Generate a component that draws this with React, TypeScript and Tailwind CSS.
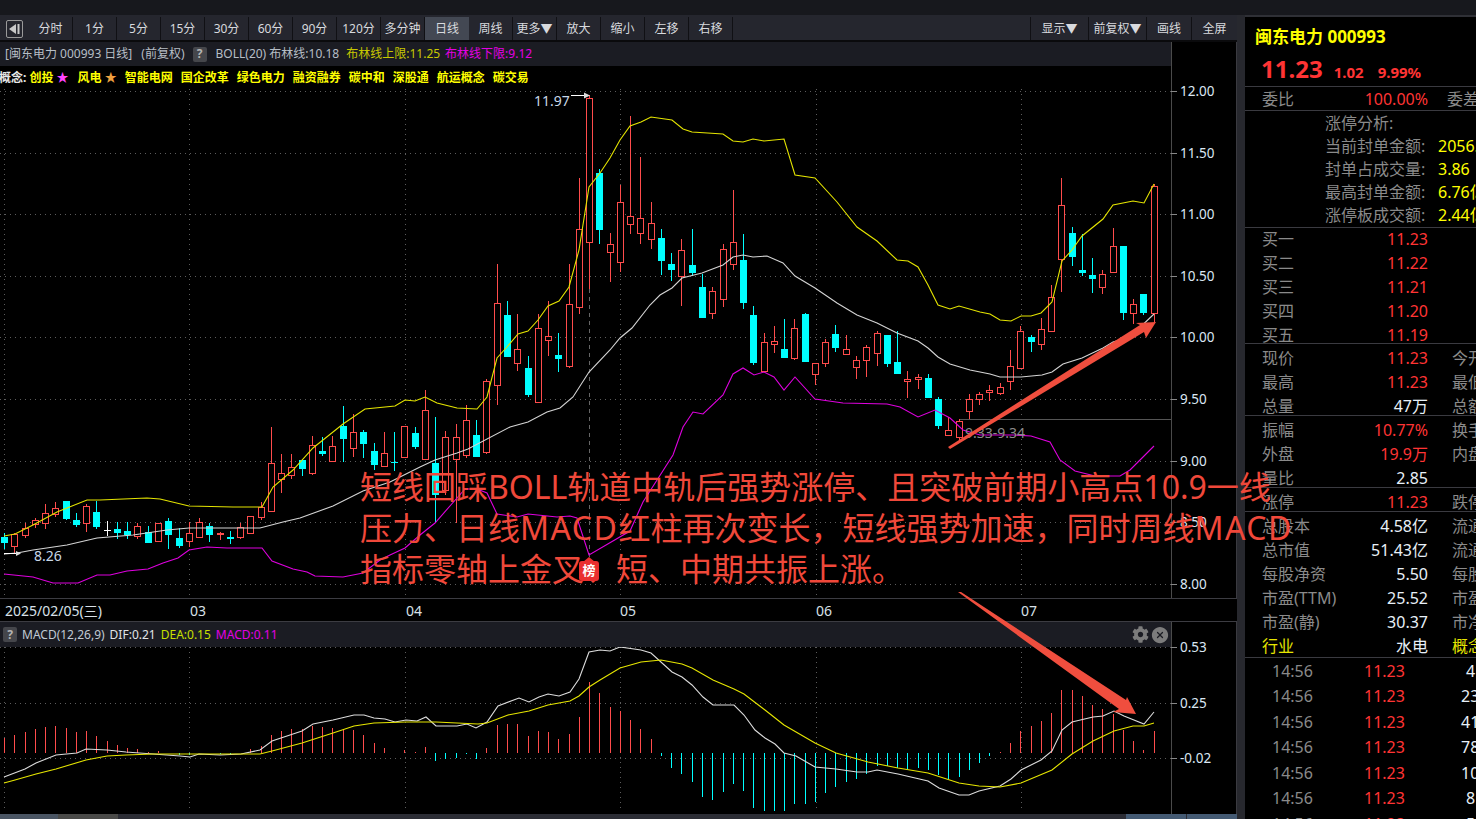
import { FaCog } from 'react-icons/fa';
import { IoCloseCircle } from 'react-icons/io5';

type Candle = [string, number, number, number, number];

// type, body top, body bottom, high, low (all in screen pixels)
const candles: Candle[] = [
  ['c', 537, 543, 533, 549], ['r', 534, 546, 533, 553], ['r', 528, 535, 523, 538], ['r', 520, 524, 518, 528],
  ['r', 513, 523, 504, 529], ['r', 508, 514, 502, 517], ['c', 501, 519, 501, 520], ['c', 520, 525, 513, 527],
  ['r', 506, 523, 504, 532], ['c', 512, 527, 501, 529], ['w', 530, 530, 521, 536], ['c', 529, 533, 522, 539],
  ['c', 531, 535, 522, 539], ['r', 526, 536, 523, 539], ['c', 532, 543, 526, 543], ['r', 523, 541, 523, 541],
  ['c', 521, 535, 518, 549], ['c', 538, 546, 528, 548], ['r', 533, 541, 522, 547], ['r', 522, 537, 518, 537],
  ['c', 526, 535, 523, 542], ['r', 533, 534, 532, 540], ['c', 537, 539, 531, 544], ['r', 527, 537, 523, 539],
  ['r', 516, 533, 516, 533], ['r', 507, 517, 502, 520], ['r', 463, 511, 427, 511], ['r', 473, 479, 454, 493],
  ['r', 467, 475, 454, 479], ['c', 460, 469, 460, 476], ['r', 445, 473, 436, 475], ['c', 451, 454, 437, 456],
  ['r', 446, 461, 436, 462], ['c', 426, 439, 406, 462], ['r', 432, 448, 414, 457], ['c', 432, 444, 430, 458],
  ['c', 451, 465, 443, 470], ['r', 453, 466, 432, 466], ['c', 462, 463, 432, 471], ['r', 426, 457, 426, 457],
  ['c', 433, 447, 427, 449], ['r', 410, 459, 390, 460], ['c', 463, 495, 417, 523], ['r', 437, 490, 431, 495],
  ['r', 437, 459, 424, 523], ['r', 420, 455, 405, 458], ['c', 435, 457, 420, 457], ['r', 381, 452, 379, 454],
  ['r', 303, 385, 264, 405], ['c', 315, 357, 301, 357], ['r', 349, 363, 314, 371], ['c', 368, 395, 356, 397],
  ['r', 328, 402, 314, 403], ['r', 336, 340, 301, 356], ['c', 355, 359, 333, 372], ['r', 304, 366, 264, 368],
  ['r', 229, 307, 178, 314], ['r', 98, 242, 95, 289], ['c', 173, 230, 169, 244], ['r', 244, 252, 233, 282],
  ['r', 202, 262, 185, 272], ['r', 216, 224, 116, 234], ['r', 218, 233, 157, 244], ['r', 223, 239, 202, 249],
  ['c', 238, 261, 229, 275], ['c', 264, 270, 253, 281], ['r', 250, 276, 239, 306], ['c', 265, 273, 229, 276],
  ['c', 287, 318, 274, 318], ['r', 291, 313, 287, 319], ['r', 249, 299, 244, 307], ['r', 242, 264, 190, 270],
  ['c', 260, 303, 234, 309], ['c', 315, 363, 306, 365], ['r', 342, 371, 333, 372], ['r', 341, 344, 326, 353],
  ['c', 349, 358, 319, 358], ['r', 328, 358, 319, 360], ['c', 314, 362, 313, 362], ['r', 363, 374, 363, 385],
  ['r', 342, 363, 339, 367], ['c', 334, 348, 325, 352], ['r', 349, 354, 335, 354], ['r', 360, 367, 356, 379],
  ['r', 347, 360, 345, 377], ['r', 333, 353, 331, 366], ['c', 335, 364, 335, 367], ['c', 362, 374, 331, 374],
  ['r', 379, 381, 371, 398], ['r', 377, 379, 374, 389], ['c', 378, 398, 374, 398], ['c', 399, 426, 397, 429],
  ['r', 430, 435, 417, 435], ['r', 421, 437, 419, 440], ['r', 399, 411, 394, 419], ['r', 394, 399, 392, 405],
  ['r', 390, 392, 385, 401], ['r', 387, 393, 383, 395], ['r', 366, 381, 350, 390], ['r', 331, 368, 326, 368],
  ['c', 337, 342, 335, 352], ['r', 329, 344, 318, 350], ['r', 297, 331, 285, 331], ['r', 205, 259, 178, 292],
  ['c', 233, 257, 227, 266], ['c', 270, 273, 234, 276], ['c', 275, 279, 258, 293], ['r', 274, 287, 270, 294],
  ['r', 246, 272, 228, 272], ['c', 246, 313, 246, 320], ['r', 304, 313, 299, 324], ['c', 294, 313, 294, 315],
  ['r', 186, 313, 184, 323],
];

const upper =
  '4,536 15,534 33,525 57,512 87,500 100,500 147,498 160,499 189,506 233,507 262,507 273,487 293,470 313,448 343,424 365,409 395,406 405,400 415,401 425,397 437,403 457,408 477,409 487,397 497,358 507,347 518,334 528,331 538,320 548,306 559,301 569,287 579,250 589,187 600,173 610,158 620,140 630,126 641,122 651,117 672,120 683,129 692,132 723,134 733,141 743,142 753,139 764,141 784,139 795,175 815,178 837,202 857,227 877,241 897,260 908,261 918,267 928,285 938,305 950,309 959,306 980,312 990,314 1000,320 1011,321 1021,316 1031,316 1041,313 1052,302 1062,261 1072,250 1082,236 1103,219 1113,205 1133,201 1144,203 1154,184';
const middle =
  '4,554 17,553 33,550 67,545 97,538 133,535 167,530 189,528 260,528 283,522 300,518 333,506 363,491 390,482 420,467 435,460 457,453 468,449 510,427 528,422 547,412 560,408 573,397 589,372 610,350 620,338 632,328 650,305 660,295 672,288 682,278 702,273 723,265 733,257 743,255 753,257 767,256 783,263 795,276 815,288 837,303 857,315 877,323 897,333 918,341 928,348 938,357 950,364 970,370 990,374 1000,377 1021,377 1042,375 1052,372 1063,364 1082,358 1103,348 1113,342 1130,337 1154,314';
const lower =
  '4,574 33,577 53,583 78,583 97,575 110,575 127,571 148,569 163,563 178,558 189,550 207,547 227,548 262,548 272,561 293,569 307,572 315,576 343,577 363,573 380,560 390,555 405,548 420,535 435,523 457,498 465,489 477,489 487,493 497,514 517,517 528,514 557,517 570,516 577,518 589,555 630,531 643,502 673,455 683,427 693,412 703,414 723,395 733,374 743,368 754,375 764,372 774,377 784,390 795,377 815,399 843,403 887,404 900,407 918,417 935,410 950,418 963,430 980,435 1013,435 1031,436 1050,442 1060,460 1075,471 1095,476 1120,476 1130,470 1140,460 1154,446';

// MACD histogram, bar height in px from the zero line (plus = red, minus = cyan)
const hist = [
  15, 18, 21, 24, 26, 27, 25, 21, 22, 17, 12, 8, 5, 4, 1, 2, 0, -2, -2, 0, 0, -1, -2, 0, 4, 7, 18, 22, 24, 24, 27, 26, 25, 24, 23, 18, 10, 5, 0, 3, 1, 6,
  -8, -6, -5, -1, -6, 5, 28, 29, 29, 17, 22, 21, 14, 19, 36, 71, 60, 46, 42, 33, 24, 14, -3, -15, -21, -29, -44, -47, -39, -31, -38, -55, -58, -58, -58,
  -51, -51, -49, -40, -34, -29, -26, -21, -13, -13, -15, -16, -15, -17, -22, -26, -24, -17, -10, -3, 1, 10, 22, 27, 32, 40, 63, 63, 57, 48, 44, 39, 23, 12, 3, 22,
];

const dif =
  '4,777 25,769 36,763 56,755 77,753 86,749 107,750 126,752 153,754 180,756 190,757 199,754 220,755 241,754 260,750 272,741 302,731 313,724 333,720 354,715 364,715 374,718 385,719 395,722 406,720 417,721 426,717 436,726 457,726 467,724 476,728 487,722 498,706 519,698 529,702 539,697 548,694 559,696 570,692 579,679 589,652 600,650 610,651 620,647 641,650 651,653 672,672 682,677 692,685 703,697 713,705 734,705 744,715 755,730 765,738 775,744 784,753 796,756 815,767 836,769 857,772 868,772 877,770 898,774 928,781 939,788 959,795 969,795 979,791 1000,786 1011,779 1021,770 1041,760 1052,751 1062,730 1072,722 1093,717 1103,716 1114,711 1124,716 1144,724 1154,712';
const dea =
  '4,783 15,780 36,774 56,769 86,760 107,756 126,755 153,754 260,754 272,751 302,743 333,733 354,726 374,723 406,722 436,722 478,724 487,723 508,715 529,711 548,705 570,701 579,696 589,687 600,680 620,668 641,662 661,660 682,664 692,668 713,680 734,689 744,694 765,710 784,725 815,743 836,753 868,762 898,768 928,773 959,783 979,786 1000,787 1021,783 1052,770 1072,754 1093,741 1114,731 1133,726 1144,726 1154,723';

const priceAxis: [string, number][] = [
  ['12.00', 91], ['11.50', 153], ['11.00', 214], ['10.50', 276], ['10.00', 337], ['9.50', 399], ['9.00', 461], ['8.50', 522], ['8.00', 584],
];
const macdAxis: [string, number][] = [['0.53', 647], ['0.25', 703], ['-0.02', 758]];
const gridX = [4.5, 189.5, 405.5, 620.5, 816.5, 1021.5];

const candleX = (i: number) => Math.floor(4.5 + 10.265 * i) + 0.5;

function CandleChart() {
  return (
    <svg viewBox="0 89 1171 509" className="block h-[509px] w-[1171px]">
      <g stroke="#5c5c5c" strokeDasharray="1 4" shapeRendering="crispEdges">
        {priceAxis.map(([label, y]) => (
          <line key={label} x1="0" x2="1171" y1={y + 0.5} y2={y + 0.5} />
        ))}
        {gridX.map((x) => (
          <line key={x} x1={x} x2={x} y1="89" y2="598" />
        ))}
      </g>
      <line x1="589.5" x2="589.5" y1="289" y2="560" stroke="#666" strokeDasharray="4 4" shapeRendering="crispEdges" />
      <line x1="959" x2="1171" y1="419.5" y2="419.5" stroke="#555" shapeRendering="crispEdges" />
      <g shapeRendering="crispEdges">
        {candles.map(([kind, top, bottom, high, low], i) => {
          const x = candleX(i);
          const color = kind === 'r' ? '#ff4c4c' : kind === 'c' ? '#00ffff' : '#ffffff';
          if (kind === 'c') {
            return (
              <g key={i}>
                <line x1={x} x2={x} y1={high} y2={low} stroke={color} />
                <rect x={x - 3.5} y={top} width="7" height={bottom - top} fill={color} />
              </g>
            );
          }
          if (kind === 'w') {
            return (
              <g key={i} stroke={color}>
                <line x1={x} x2={x} y1={high} y2={low} />
                <line x1={x - 3.5} x2={x + 3.5} y1={top + 0.5} y2={top + 0.5} />
              </g>
            );
          }
          return (
            <g key={i} stroke={color}>
              <line x1={x} x2={x} y1={high} y2={top} />
              <line x1={x} x2={x} y1={bottom} y2={low} />
              <rect x={x - 3} y={top + 0.5} width="6" height={bottom - top} fill="#000" />
            </g>
          );
        })}
      </g>
      <g fill="none" strokeWidth="1.1">
        <polyline points={upper} stroke="#e4e400" />
        <polyline points={middle} stroke="#d4d4d4" />
        <polyline points={lower} stroke="#de00de" />
      </g>
      <line x1="4" x2="20" y1="553.5" y2="553.5" stroke="#fff" />
      <polygon points="16,551 21,553.5 16,556" fill="#ddd" />
      <line x1="571" x2="585" y1="95.5" y2="95.5" stroke="#fff" />
      <polygon points="584,92.5 590,95.5 584,98.5" fill="#ddd" />
      <g fontSize="14">
        <text x="34" y="561" fill="#c8d8e8">8.26</text>
        <text x="534" y="106" fill="#c8d8e8">11.97</text>
        <text x="965" y="438" fill="#8c8c8c">9.33-9.34</text>
      </g>
    </svg>
  );
}

function MacdChart() {
  return (
    <svg viewBox="0 647 1171 167" className="block h-[167px] w-[1171px]">
      <g stroke="#5c5c5c" strokeDasharray="1 4" shapeRendering="crispEdges">
        {macdAxis.map(([label, y]) => (
          <line key={label} x1="0" x2="1171" y1={y + 0.5} y2={y + 0.5} />
        ))}
        {gridX.map((x) => (
          <line key={x} x1={x} x2={x} y1="647" y2="812" />
        ))}
      </g>
      <g shapeRendering="crispEdges">
        {hist.map((h, i) =>
          h === 0 ? null : (
            <line
              key={i}
              x1={candleX(i)}
              x2={candleX(i)}
              y1={753}
              y2={753 - h}
              stroke={h > 0 ? '#ff4c4c' : '#00ffff'}
            />
          ),
        )}
      </g>
      <g fill="none" strokeWidth="1.1">
        <polyline points={dif} stroke="#dcdcdc" />
        <polyline points={dea} stroke="#e6e600" />
      </g>
    </svg>
  );
}

function Axis({ marks, top, height }: { marks: [string, number][]; top: number; height: number }) {
  return (
    <svg viewBox={`1171 ${top} 66 ${height}`} className="block w-[66px]" style={{ height }}>
      <line x1="1171.5" x2="1171.5" y1={top} y2={top + height} stroke="#4a4a4a" shapeRendering="crispEdges" />
      <line x1="1236.5" x2="1236.5" y1={top} y2={top + height} stroke="#3a3a40" shapeRendering="crispEdges" />
      {marks.map(([label, y]) => (
        <g key={label}>
          <line x1="1171" x2="1177" y1={y + 0.5} y2={y + 0.5} stroke="#888" shapeRendering="crispEdges" />
          <text x="1180" y={y + 5} fontSize="13.5" fill="#dbe7f3">
            {label}
          </text>
        </g>
      ))}
    </svg>
  );
}

const leftButtons = ['分时', '1分', '5分', '15分', '30分', '60分', '90分', '120分', '多分钟', '日线', '周线', '更多▼', '放大', '缩小', '左移', '右移'];

function Toolbar() {
  return (
    <div className="flex h-[27px] items-stretch border-b-2 border-[#0a0a0c] bg-[#25262e] pt-[2px] text-[12px] text-[#d8dade]">
      <div className="flex w-[29px] items-center justify-center">
        <div className="flex h-[18px] w-[17px] items-center justify-center rounded-[2px] border border-[#9a9a9a]">
          <svg viewBox="0 0 13 12" className="h-[12px] w-[13px]">
            <polygon points="1,6 8,1 8,11" fill="#c8c8c8" />
            <rect x="9.5" y="1" width="2" height="10" fill="#c8c8c8" />
          </svg>
        </div>
      </div>
      {leftButtons.map((name) => (
        <div
          key={name}
          className={
            name === '日线'
              ? 'flex w-[44px] items-center justify-center whitespace-nowrap bg-[#434853]'
              : 'flex w-[44px] items-center justify-center whitespace-nowrap border-r border-[#101014]'
          }
        >
          {name}
        </div>
      ))}
      <div className="flex-1 border-r border-[#101014]" />
      <div className="flex w-[58px] items-center justify-center border-r border-[#101014]">显示▼</div>
      <div className="flex w-[58px] items-center justify-center border-r border-[#101014]">前复权▼</div>
      <div className="flex w-[45px] items-center justify-center border-r border-[#101014]">画线</div>
      <div className="flex w-[45px] items-center justify-center">全屏</div>
    </div>
  );
}

function Question() {
  return (
    <span className="flex h-[15px] w-[14px] items-center justify-center rounded-[2px] bg-[#45464b] text-[12px] font-bold text-[#b4b4b4]">
      ?
    </span>
  );
}

const concepts = ['智能电网', '国企改革', '绿色电力', '融资融券', '碳中和', '深股通', '航运概念', '碳交易'];

function UpperPanel() {
  return (
    <div className="flex h-[556px]">
      <div className="w-[1171px]">
        <div className="flex h-[24px] items-center whitespace-nowrap bg-[#1b1c23] pl-[5px] text-[12px] text-[#b7bec6]">
          <span>[闽东电力 000993 日线]</span>
          <span className="ml-[9px]">(前复权)</span>
          <span className="ml-[8px]"><Question /></span>
          <span className="ml-[9px]">BOLL(20) 布林线:10.18</span>
          <span className="ml-[7px] text-[#c8c800]">布林线上限:11.25</span>
          <span className="ml-[5px] text-[#e400e4]">布林线下限:9.12</span>
        </div>
        <div className="flex h-[23px] items-center gap-[8px] overflow-hidden whitespace-nowrap text-[12px] font-bold text-[#ffff00]">
          <span className="-ml-[1px] text-[#e8e8e8]">概念:</span>
          <span className="-ml-[5px]">创投 <span className="text-[#ff44ff]">★</span></span>
          <span className="ml-[1px]">风电 <span className="text-[#f0a040]">★</span></span>
          {concepts.map((c) => (
            <span key={c}>{c}</span>
          ))}
        </div>
        <CandleChart />
      </div>
      <Axis marks={priceAxis} top={42} height={556} />
    </div>
  );
}

function DateRow() {
  return (
    <div className="flex h-[23px] items-center border-t border-[#3c3c42] text-[14px] text-[#d8e0e8]">
      <div className="w-[190px] pl-[5px]">2025/02/05(三)</div>
      <div className="w-[216px]">03</div>
      <div className="w-[214px]">04</div>
      <div className="w-[196px]">05</div>
      <div className="w-[205px]">06</div>
      <div>07</div>
    </div>
  );
}

function MacdPanel() {
  return (
    <div className="flex h-[193px] border-t border-[#3c3c42]">
      <div className="w-[1171px]">
        <div className="flex h-[25px] items-center whitespace-nowrap bg-[#1b1c23] pl-[3px] text-[12px] text-[#c0cad4]">
          <Question />
          <span className="ml-[5px]">MACD(12,26,9)</span>
          <span className="ml-[5px] text-[#e0e4e8]">DIF:0.21</span>
          <span className="ml-[5px] text-[#c8e000]">DEA:0.15</span>
          <span className="ml-[5px] text-[#e400e4]">MACD:0.11</span>
          <div className="ml-auto mr-[1px] flex items-center gap-[1px] text-[#7c7c7c]">
            <FaCog className="h-[17px] w-[17px]" />
            <IoCloseCircle className="h-[20px] w-[20px]" />
          </div>
        </div>
        <MacdChart />
      </div>
      <Axis marks={macdAxis} top={622} height={192} />
    </div>
  );
}

function BottomBar() {
  return (
    <div className="flex h-[5px] bg-[#2c2d35]">
      <div className="w-[58px] bg-[#4a5563]" />
      <div className="w-[60px] bg-[#4a4a48]" />
      <div className="flex-1" />
      <div className="w-[61px] border-r border-[#2c2d35] bg-[#445a73]" />
      <div className="w-[50px] bg-[#445a73]" />
    </div>
  );
}

type Row = { label: string; value: string; color?: string; side?: string };

function StatRow({ label, value, color, side }: Row) {
  return (
    <div className="flex h-[24px] items-center whitespace-nowrap pl-[17px]">
      <span className={label === '行业' ? 'w-[80px] shrink-0 text-[16px] text-[#e6e600]' : 'w-[80px] shrink-0 text-[16px] text-[#8a8a8a]'}>{label}</span>
      <span className={`w-[86px] shrink-0 text-right text-[16px] ${color === 'red' ? 'text-[#ff3434]' : 'text-[#e8f0f8]'}`}>{value}</span>
      {side && (
        <span className={side === '概念' ? 'ml-[24px] shrink-0 text-[16px] text-[#e6e600]' : 'ml-[24px] shrink-0 text-[16px] text-[#8a8a8a]'}>{side}</span>
      )}
    </div>
  );
}

const limitRows = [
  ['当前封单金额:', '2056.8万'],
  ['封单占成交量:', '3.86'],
  ['最高封单金额:', '6.76亿'],
  ['涨停板成交额:', '2.44亿'],
];
const bids = [['买一', '11.23'], ['买二', '11.22'], ['买三', '11.21'], ['买四', '11.20'], ['买五', '11.19']];
const quote: Row[] = [
  { label: '现价', value: '11.23', color: 'red', side: '今开' },
  { label: '最高', value: '11.23', color: 'red', side: '最低' },
  { label: '总量', value: '47万', side: '总额' },
];
const quote2: Row[] = [
  { label: '振幅', value: '10.77%', color: 'red', side: '换手' },
  { label: '外盘', value: '19.9万', color: 'red', side: '内盘' },
  { label: '量比', value: '2.85' },
];
const fundamentals: Row[] = [
  { label: '总股本', value: '4.58亿', side: '流通' },
  { label: '总市值', value: '51.43亿', side: '流通' },
  { label: '每股净资', value: '5.50', side: '每股' },
  { label: '市盈(TTM)', value: '25.52', side: '市盈' },
  { label: '市盈(静)', value: '30.37', side: '市净' },
  { label: '行业', value: '水电', side: '概念' },
];
const ticks = ['4', '23', '41', '78', '10', '8', '5'];

function SidePanel() {
  return (
    <aside className="w-[231px] overflow-hidden border-t-2 border-[#2f3036] bg-black">
      <div className="h-[70px] border-b border-[#3a3a40] pt-[9px]">
        <div className="pl-[10px] text-[17px] font-bold leading-[22px] text-[#ffff00]">闽东电力 000993</div>
        <div className="mt-[6px] flex items-baseline pl-[16px] font-bold text-[#ff3434]">
          <span className="text-[24px] leading-[30px]">11.23</span>
          <span className="ml-[11px] text-[15px]">1.02</span>
          <span className="ml-[14px] text-[15px]">9.99%</span>
        </div>
      </div>
      <div className="flex h-[24px] items-center whitespace-nowrap border-b border-[#3a3a40] pl-[17px] pt-[1px]">
        <span className="w-[80px] shrink-0 text-[16px] text-[#8a8a8a]">委比</span>
        <span className="w-[86px] shrink-0 text-right text-[16px] text-[#ff3434]">100.00%</span>
        <span className="ml-[19px] shrink-0 text-[16px] text-[#8a8a8a]">委差</span>
      </div>
      <div className="h-[117px] border-b border-[#3a3a40]">
        <div className="flex h-[23px] items-center pl-[80px] text-[16px] text-[#8a8a8a]">涨停分析:</div>
        {limitRows.map(([label, value]) => (
          <div key={label} className="flex h-[23px] items-center whitespace-nowrap pl-[80px]">
            <span className="w-[113px] shrink-0 text-[16px] text-[#8a8a8a]">{label}</span>
            <span className="shrink-0 text-[16px] text-[#ffff00]">{value}</span>
          </div>
        ))}
      </div>
      <div className="h-[117px] border-b border-[#3a3a40]">
        <div className="-mt-px">
          {bids.map(([label, value]) => (
            <StatRow key={label} label={label} value={value} color="red" />
          ))}
        </div>
      </div>
      <div className="h-[72px] border-b border-[#3a3a40] pt-[2px]">
        {quote.map((r) => (
          <StatRow key={r.label} {...r} />
        ))}
      </div>
      <div className="h-[72px] border-b border-[#3a3a40] pt-[2px]">
        {quote2.map((r) => (
          <StatRow key={r.label} {...r} />
        ))}
      </div>
      <div className="h-[24px] border-b border-[#3a3a40] pt-[2px]">
        <StatRow label="涨停" value="11.23" color="red" side="跌停" />
      </div>
      <div className="h-[146px] border-b border-[#3a3a40] pt-[2px]">
        {fundamentals.map((r) => (
          <StatRow key={r.label} {...r} />
        ))}
      </div>
      {ticks.map((v, i) => (
        <div key={i} className="flex h-[25.5px] items-center whitespace-nowrap pl-[27px] text-[16px]">
          <span className="w-[92px] shrink-0 text-[#8a8a8a]">14:56</span>
          <span className="w-[97px] shrink-0 text-[#ff3434]">11.23</span>
          <span className={v.length === 1 ? 'shrink-0 pl-[5px] text-[#e8f0f8]' : 'shrink-0 text-[#e8f0f8]'}>{v}</span>
        </div>
      ))}
    </aside>
  );
}

export default function App() {
  return (
    <div className="relative h-[819px] w-[1476px] overflow-hidden bg-black font-['Noto_Sans','Noto_Sans_CJK_SC',sans-serif]">
      <div className="h-[15px] bg-[#17181d]" />
      <div className="flex h-[804px]">
        <div className="w-[1237px]">
          <Toolbar />
          <UpperPanel />
          <DateRow />
          <MacdPanel />
          <BottomBar />
        </div>
        <div className="w-[8px] bg-[#27282e]" />
        <SidePanel />
      </div>

      {/* hand-drawn note on top of the chart */}
      <svg viewBox="0 0 1476 819" className="pointer-events-none absolute inset-0 h-[819px] w-[1476px]">
        <polygon points="948,447 1140,325 1136,323 1156,322 1146,338 1144,332 950,449" fill="#f04e3e" />
        <polygon points="958,592 961,592 1126,700 1127,697 1136,714 1113,712 1119,709" fill="#f04e3e" />
        <polygon points="589,557 583,562 595,562" fill="#ea2f2f" />
      </svg>
      <div className="absolute left-[360px] top-[466px] whitespace-nowrap text-[32px] leading-[41px] text-[#f0483a]">
        <div>短线回踩BOLL轨道中轨后强势涨停、且突破前期小高点10.9一线</div>
        <div>
          压力、日线<span className="tracking-[1.5px]">MACD</span>红柱再次变长，短线强势加速，同时周线<span className="tracking-[1.5px]">MACD</span>
        </div>
        <div>指标零轴上金叉、短、中期共振上涨。</div>
      </div>
      <div className="absolute left-[579px] top-[561px] flex h-[20px] w-[20px] items-center justify-center rounded-[3px] bg-[#ea2f2f] text-[13px] font-bold text-white">
        榜
      </div>
    </div>
  );
}
